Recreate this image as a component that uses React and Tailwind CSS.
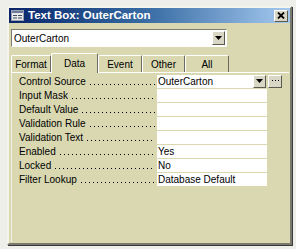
import React from "react";

const rows = [
  { label: "Control Source", value: "OuterCarton", combo: true },
  { label: "Input Mask", value: "" },
  { label: "Default Value", value: "" },
  { label: "Validation Rule", value: "" },
  { label: "Validation Text", value: "" },
  { label: "Enabled", value: "Yes" },
  { label: "Locked", value: "No" },
  { label: "Filter Lookup", value: "Database Default" },
];

const tabs = [
  { name: "Format", w: "w-[40px]" },
  { name: "Data", w: "w-[47px]", active: true },
  { name: "Event", w: "w-[44px]" },
  { name: "Other", w: "w-[43px]" },
  { name: "All", w: "w-[44px]" },
];

const Arrow = () => (
  <svg width="7" height="4" viewBox="0 0 7 4">
    <path d="M0 0h7L3.5 4z" fill="#000" />
  </svg>
);

// small raised gray button used in the combos
const Btn = ({ className = "", children }) => (
  <div
    className={`flex items-center justify-center bg-[#d8d6c4] border border-t-white border-l-white border-r-[#5a5a50] border-b-[#5a5a50] ${className}`}
  >
    {children}
  </div>
);

const FormIcon = () => (
  <svg width="13" height="11" viewBox="0 0 13 11">
    <rect x="0.5" y="0.5" width="12" height="10" fill="#e8e8e8" stroke="#9aa0b0" />
    <rect x="1" y="1" width="11" height="2" fill="#6a7a9a" />
    <rect x="2" y="5" width="4" height="1" fill="#404a60" />
    <rect x="7" y="5" width="4" height="1" fill="#404a60" />
    <rect x="2" y="7.5" width="4" height="1" fill="#404a60" />
    <rect x="7" y="7.5" width="4" height="1" fill="#404a60" />
  </svg>
);

const PropRow = ({ label, value, combo }) => (
  <div className="flex h-[14px] items-center">
    <div className="w-[136px] mr-[2px] h-[14px] flex items-center whitespace-nowrap text-black">
      <span>{label}</span>
      {/* dot leader */}
      <div className="flex-1 ml-[4px] mt-[7px] h-[1px] bg-[repeating-linear-gradient(to_right,#000_0_1px,transparent_1px_4px)]" />
    </div>
    {combo ? (
      <div className="flex items-center h-[13px]">
        <div className="w-[96px] h-[13px] bg-white pl-[1px] leading-[13px] whitespace-nowrap">
          {value}
        </div>
        <Btn className="w-[13px] h-[13px]">
          <Arrow />
        </Btn>
        <Btn className="w-[14px] h-[13px] ml-[2px]">
          <svg width="7" height="2" viewBox="0 0 7 2">
            <path d="M0 0h1v1H0zM3 0h1v1H3zM6 0h1v1H6z" fill="#000" />
          </svg>
        </Btn>
      </div>
    ) : (
      <div className="w-[110px] h-[13px] bg-white pl-[1px] leading-[13px] whitespace-nowrap">
        {value}
      </div>
    )}
  </div>
);

export default function App() {
  return (
    <div className="w-[296px] h-[249px] overflow-hidden bg-[#eeeeea] pt-[6px] pl-[7px] font-['Liberation_Sans',Arial,sans-serif] text-[10px]">
      <div className="w-[285px] h-[239px] bg-[#d9d8b1] border-2 border-t-[#f4f4ec] border-l-[#f4f4ec] border-r-[#7a7a70] border-b-[#7a7a70] shadow-[1px_1px_0_#3a3a3a] flex flex-col">
        {/* title bar */}
        <div className="h-[15px] flex items-center bg-gradient-to-r from-[#0a246a] via-[#3a6ea5] to-[#a6caf0] pl-[2px] pr-[2px]">
          <FormIcon />
          <span className="ml-[4px] text-white font-bold text-[11.5px] leading-none">
            Text Box: OuterCarton
          </span>
          <div className="ml-auto">
            <Btn className="w-[14px] h-[12px]">
              <svg width="8" height="7" viewBox="0 0 8 7">
                <path d="M1 0.5l6 6M7 0.5l-6 6" stroke="#000" strokeWidth="1.8" />
              </svg>
            </Btn>
          </div>
        </div>

        {/* object combo */}
        <div className="mt-[6px] ml-[2px] w-[216px] h-[18px] bg-white border border-t-[#7a7a70] border-l-[#7a7a70] border-r-white border-b-white flex items-center">
          <span className="pl-[2px] flex-1">OuterCarton</span>
          <Btn className="w-[13px] h-[14px] mr-[1px]">
            <Arrow />
          </Btn>
        </div>

        {/* tabs */}
        <div className="mt-[6px] ml-[2px] h-[19px] flex items-end">
          {tabs.map((t) =>
            t.active ? (
              <div
                key={t.name}
                className={`${t.w} h-[20px] -mb-[1px] z-10 bg-[#d9d8b1] border-t border-l border-r border-t-white border-l-white border-r-[#6a6a60] rounded-t-[2px] flex items-center justify-center`}
              >
                Data
              </div>
            ) : (
              <div
                key={t.name}
                className={`${t.w} h-[17px] border-t border-l border-r border-t-white border-l-white border-r-[#6a6a60] rounded-t-[2px] flex items-center justify-center`}
              >
                {t.name}
              </div>
            )
          )}
        </div>

        {/* panel */}
        <div className="ml-[2px] mr-[1px] flex-1 border-t border-l border-t-white border-l-[#f0f0e4] pt-[1px] pl-[7px] mb-[1px]">
          {rows.map((r) => (
            <PropRow key={r.label} {...r} />
          ))}
        </div>
      </div>
    </div>
  );
}
